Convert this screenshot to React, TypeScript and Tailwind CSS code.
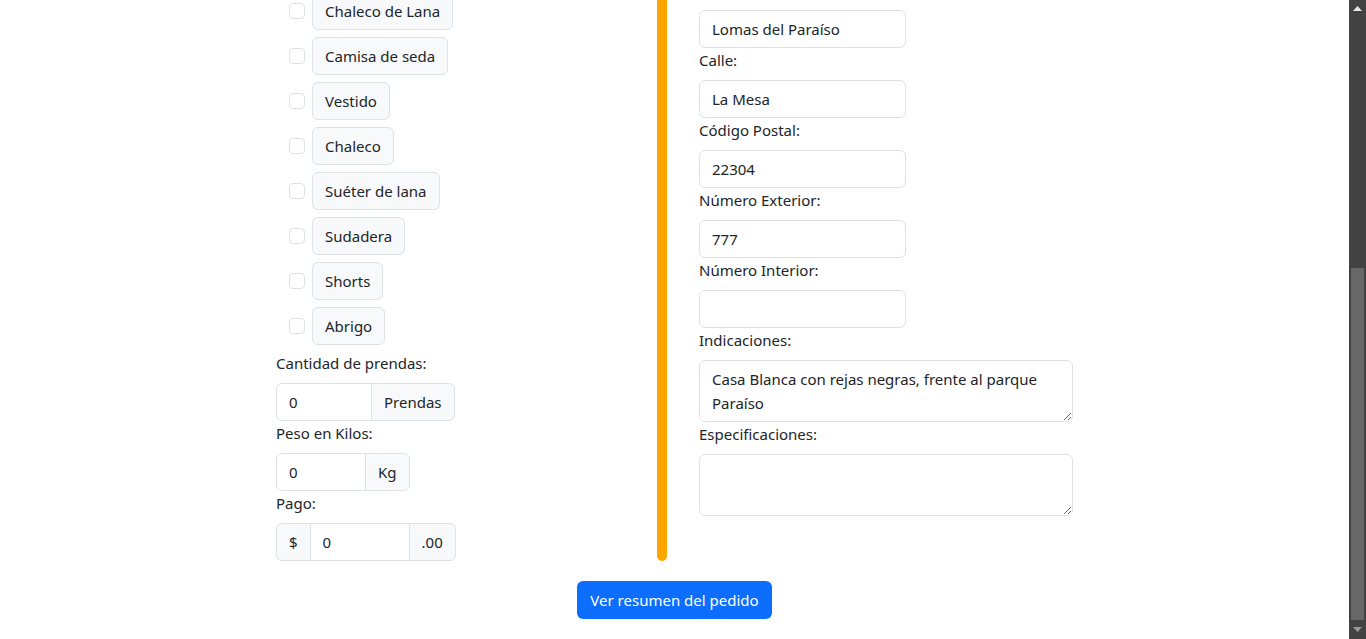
import React from 'react';

const font = "font-['Segoe_UI','Noto_Sans',sans-serif]";

const prendas = [
  'Chaleco de Lana',
  'Camisa de seda',
  'Vestido',
  'Chaleco',
  'Suéter de lana',
  'Sudadera',
  'Shorts',
  'Abrigo',
];

const PrendaCheck: React.FC<{ name: string }> = ({ name }) => (
  <div className="flex items-center h-[38px]">
    <span className="ml-[13px] mr-[7px] w-4 h-4 rounded-[4px] border border-[#dee2e6] bg-white" />
    <span className="h-[38px] px-[12px] flex items-center rounded-[6px] border border-[#dee2e6] bg-[#f8f9fa]">
      {name}
    </span>
  </div>
);

const Label: React.FC<{ children: React.ReactNode }> = ({ children }) => (
  <div className="h-6 leading-6 mb-2">{children}</div>
);

const Field: React.FC<{ label?: string; value: string }> = ({ label, value }) => (
  <>
    {label ? <Label>{label}</Label> : <div className="h-6 mb-2" />}
    <input
      readOnly
      value={value}
      className="block w-[207px] h-[38px] px-[12px] rounded-[6px] border border-[#dee2e6] bg-white outline-none text-[#212529]"
    />
  </>
);

const Addon: React.FC<{ children: React.ReactNode; className?: string }> = ({ children, className }) => (
  <span className={`h-[38px] px-[12px] flex items-center border border-[#dee2e6] bg-[#f8f9fa] ${className ?? ''}`}>
    {children}
  </span>
);

const ScrollBar: React.FC = () => (
  <div className="w-[17px] h-[639px] bg-[#424242] flex flex-col items-center shrink-0">
    <div className="h-[17px] flex items-center justify-center">
      <svg width="9" height="5" viewBox="0 0 9 5"><path d="M4.5 0L9 5H0z" fill="#e8e8e8" /></svg>
    </div>
    <div className="h-[251px]" />
    <div className="w-[13px] h-[352px] bg-[#686868]" />
    <div className="flex-1 flex items-center justify-center">
      <svg width="9" height="5" viewBox="0 0 9 5"><path d="M0 0H9L4.5 5z" fill="#9a9a9a" /></svg>
    </div>
  </div>
);

export default function App() {
  return (
    <div className={`flex h-[639px] overflow-hidden bg-white text-[15px] text-[#212529] ${font}`}>
      <div className="flex-1 overflow-hidden">
        <div className="-mt-[22px] flex flex-col items-center">
          <div className="flex w-[797px]">
            {/* prendas */}
            <div className="w-[381px] pt-[14px]">
              <div className="flex flex-col gap-[7px]">
                {prendas.map(p => (
                  <PrendaCheck key={p} name={p} />
                ))}
              </div>
              <div className="mt-[6px]">
                <Label>Cantidad de prendas:</Label>
                <div className="flex">
                  <input readOnly value="0" className="w-[96px] h-[38px] px-[12px] rounded-l-[6px] border border-[#dee2e6] outline-none" />
                  <Addon className="-ml-px rounded-r-[6px]">Prendas</Addon>
                </div>
                <Label>Peso en Kilos:</Label>
                <div className="flex">
                  <input readOnly value="0" className="w-[90px] h-[38px] px-[12px] rounded-l-[6px] border border-[#dee2e6] outline-none" />
                  <Addon className="-ml-px rounded-r-[6px]">Kg</Addon>
                </div>
                <Label>Pago:</Label>
                <div className="flex">
                  <Addon className="rounded-l-[6px]">$</Addon>
                  <input readOnly value="0" className="-ml-px w-[100px] h-[38px] px-[12px] border border-[#dee2e6] outline-none" />
                  <Addon className="-ml-px rounded-r-[6px]">.00</Addon>
                </div>
              </div>
            </div>

            {/* barra */}
            <div className="w-[10px] bg-[#ffa500] rounded-b-full" />

            {/* domicilio */}
            <div className="w-[406px] pl-[32px]">
              <Field value="Lomas del Paraíso" />
              <Field label="Calle:" value="La Mesa" />
              <Field label="Código Postal:" value="22304" />
              <Field label="Número Exterior:" value="777" />
              <Field label="Número Interior:" value="" />
              <Label>Indicaciones:</Label>
              <textarea
                readOnly
                value="Casa Blanca con rejas negras, frente al parque Paraíso"
                className="block w-[374px] h-[62px] px-[12px] py-[6px] leading-6 rounded-[6px] border border-[#dee2e6] outline-none"
              />
              <Label>Especificaciones:</Label>
              <textarea
                readOnly
                value=""
                className="block w-[374px] h-[62px] px-[12px] py-[6px] leading-6 rounded-[6px] border border-[#dee2e6] outline-none"
              />
            </div>
          </div>

          <button className="mt-[20px] h-[38px] px-[13px] rounded-[6px] bg-[#0d6efd] text-white">
            Ver resumen del pedido
          </button>
        </div>
      </div>
      <ScrollBar />
    </div>
  );
}
